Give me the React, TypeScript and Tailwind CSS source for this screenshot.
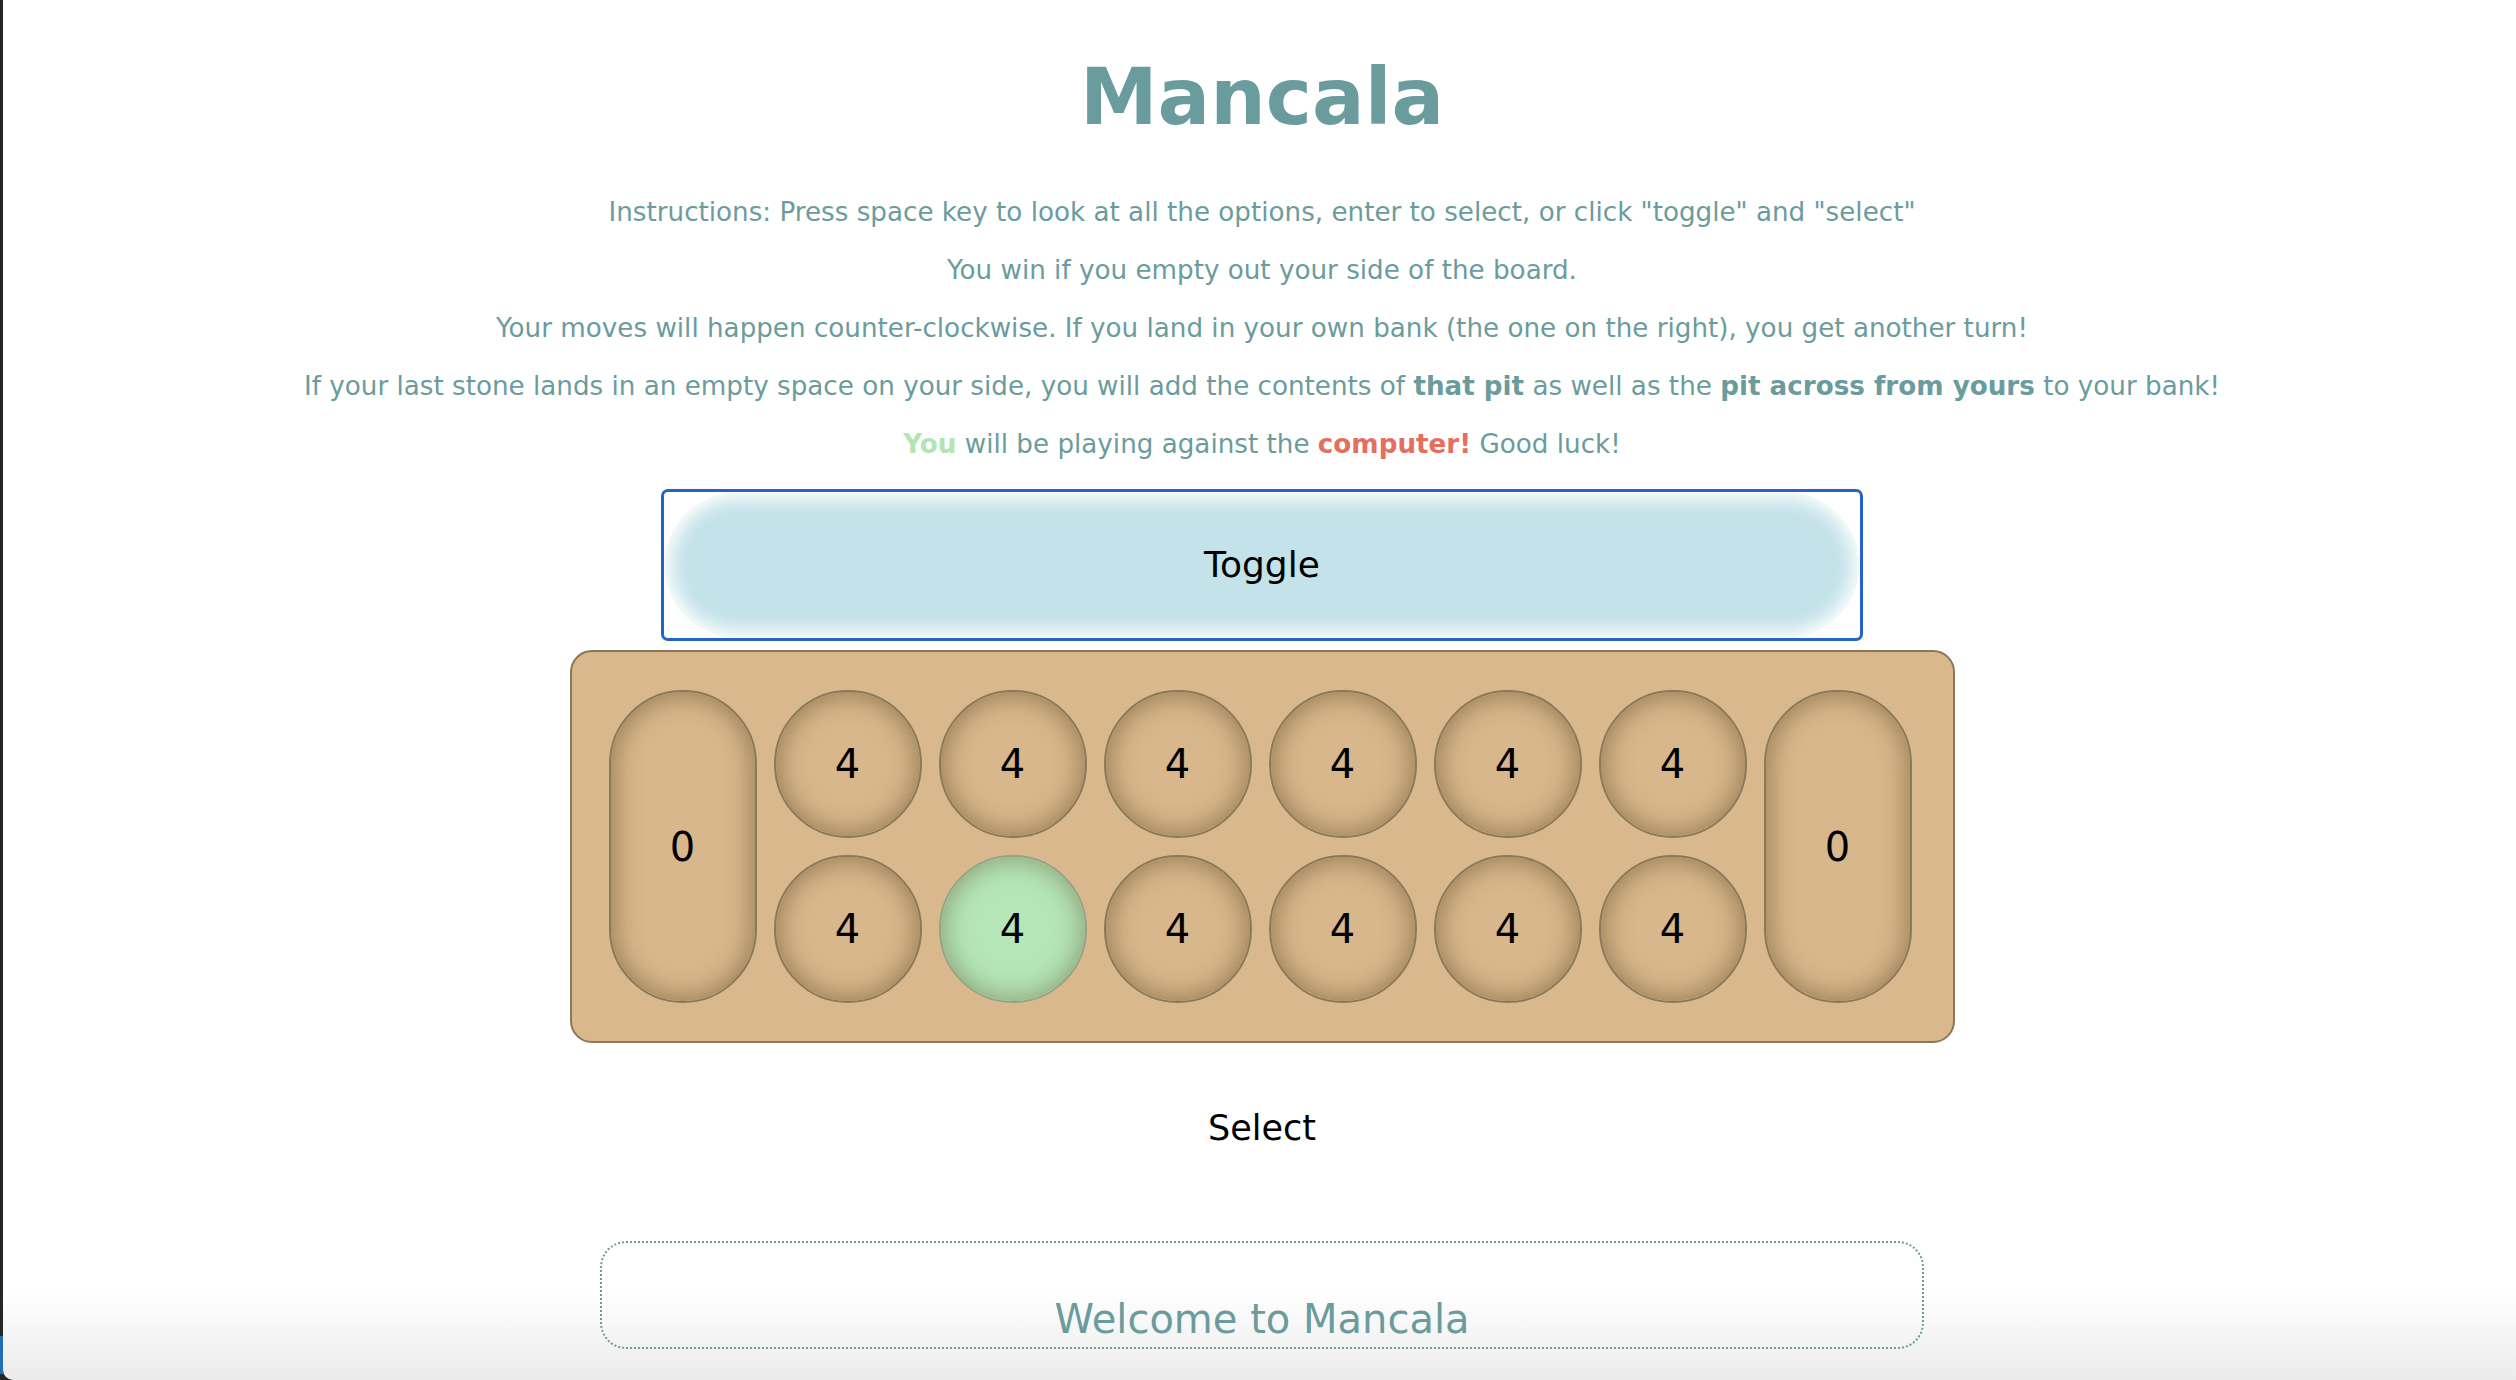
import React from "react";

type PitProps = {
  count: number;
  active?: boolean;
};

const Pit = ({ count, active }: PitProps): React.ReactElement => (
  <div
    className={`flex h-[148px] w-[148px] items-center justify-center rounded-full border-2 text-[40px] text-black ${
      active
        ? "border-[#94a384] bg-[#b5e6b8] shadow-[inset_0_0_26px_3px_rgba(105,105,65,0.55)]"
        : "border-[#8a785b] bg-[#d7b78b] shadow-[inset_0_0_26px_3px_rgba(100,75,40,0.55)]"
    }`}
  >
    {count}
  </div>
);

const Bank = ({ count }: { count: number }): React.ReactElement => (
  <div className="flex h-[313px] w-[148px] items-center justify-center rounded-full border-2 border-[#8a785b] bg-[#d7b78b] text-[40px] text-black shadow-[inset_0_0_26px_3px_rgba(100,75,40,0.55)]">
    {count}
  </div>
);

export default function App() {
  const computerPits = [4, 4, 4, 4, 4, 4];
  const playerPits = [4, 4, 4, 4, 4, 4];
  const selected = 1;

  return (
    <div className="flex min-h-screen bg-[#262626] font-['DejaVu_Sans',Verdana,sans-serif]">
      <div className="flex w-[3px] flex-col justify-end">
        <div className="mb-[6px] h-[38px] bg-[#1f6fb5]" />
      </div>
      <main className="flex flex-1 flex-col items-center rounded-bl-[10px] bg-[linear-gradient(to_bottom,#ffffff_0px,#ffffff_1290px,#ebebeb_1380px)] pl-[5px]">
        <h1 className="mt-[51px] text-[78px] font-bold leading-[93px] text-[#6b9c9d]">
          Mancala
        </h1>

        <div className="mt-[39px] flex flex-col items-center text-[26.2px] leading-[58px] text-[#6b9c9d]">
          <p>
            Instructions: Press space key to look at all the options, enter to
            select, or click "toggle" and "select"
          </p>
          <p>You win if you empty out your side of the board.</p>
          <p>
            Your moves will happen counter-clockwise. If you land in your own
            bank (the one on the right), you get another turn!
          </p>
          <p>
            If your last stone lands in an empty space on your side, you will
            add the contents of <b>that pit</b> as well as the{" "}
            <b>pit across from yours</b> to your bank!
          </p>
          <p>
            <b className="text-[#b3e4b3]">You</b> will be playing against the{" "}
            <b className="text-[#e56f5f]">computer!</b> Good luck!
          </p>
        </div>

        <div className="mt-[16px] h-[152px] w-[1202px] rounded-[7px] border-[3px] border-[#2563c9] bg-white p-[1px]">
          <div className="flex h-full w-full items-center justify-center rounded-full bg-[#c4e2e9] text-[36px] text-black shadow-[inset_0_0_18px_6px_#ffffff]">
            Toggle
          </div>
        </div>

        <div className="mt-[9px] flex gap-[17px] rounded-[22px] border-2 border-[#8b7657] bg-[#d8b88c] py-[38px] pl-[37px] pr-[41px]">
          <Bank count={0} />
          <div className="grid grid-cols-6 gap-x-[17px] gap-y-[17px]">
            {computerPits.map((n, i) => (
              <Pit key={`c${i}`} count={n} />
            ))}
            {playerPits.map((n, i) => (
              <Pit key={`p${i}`} count={n} active={i === selected} />
            ))}
          </div>
          <Bank count={0} />
        </div>

        <div className="mt-[65px] text-[35px] leading-[40px] text-black">
          Select
        </div>

        <div className="mt-[93px] flex h-[108px] w-[1324px] items-end justify-center rounded-[26px] border-2 border-dotted border-[#6b9c9d] pb-[4px] text-[40px] leading-[47px] text-[#6b9c9d]">
          Welcome to Mancala
        </div>
      </main>
    </div>
  );
}
